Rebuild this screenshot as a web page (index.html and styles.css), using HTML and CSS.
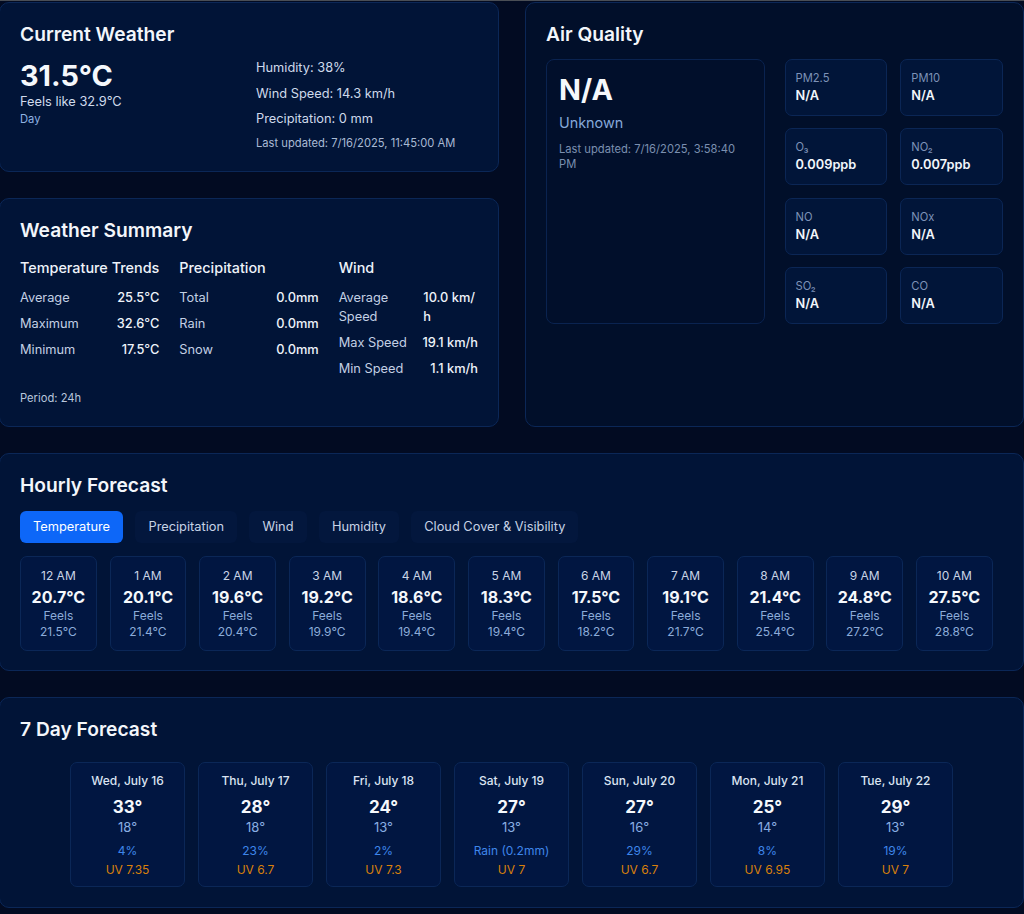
FILE: index.html
```html
<!DOCTYPE html>
<html lang="en">
<head>
<meta charset="utf-8">
<title>Weather Dashboard</title>
<link rel="stylesheet" href="styles.css">
</head>
<body>
<div class="page">
  <div class="top-grid">
    <div class="left-col">
      <section class="card current">
        <h2 class="card-title">Current Weather</h2>
        <div class="current-grid">
          <div class="current-main">
            <div class="big-temp">31.5°C</div>
            <div class="feels">Feels like 32.9°C</div>
            <div class="daynight">Day</div>
          </div>
          <div class="current-details">
            <p class="detail">Humidity: 38%</p>
            <p class="detail">Wind Speed: 14.3 km/h</p>
            <p class="detail">Precipitation: 0 mm</p>
            <p class="updated">Last updated: 7/16/2025, 11:45:00 AM</p>
          </div>
        </div>
      </section>

      <section class="card summary">
        <h2 class="card-title">Weather Summary</h2>
        <div class="summary-grid">
          <div class="summary-col">
            <h3 class="summary-head">Temperature Trends</h3>
            <div class="srow"><span class="slabel">Average</span><span class="svalue">25.5°C</span></div>
            <div class="srow"><span class="slabel">Maximum</span><span class="svalue">32.6°C</span></div>
            <div class="srow"><span class="slabel">Minimum</span><span class="svalue">17.5°C</span></div>
          </div>
          <div class="summary-col">
            <h3 class="summary-head">Precipitation</h3>
            <div class="srow"><span class="slabel">Total</span><span class="svalue">0.0mm</span></div>
            <div class="srow"><span class="slabel">Rain</span><span class="svalue">0.0mm</span></div>
            <div class="srow"><span class="slabel">Snow</span><span class="svalue">0.0mm</span></div>
          </div>
          <div class="summary-col">
            <h3 class="summary-head">Wind</h3>
            <div class="srow"><span class="slabel">Average Speed</span><span class="svalue">10.0 km/h</span></div>
            <div class="srow"><span class="slabel">Max Speed</span><span class="svalue">19.1 km/h</span></div>
            <div class="srow"><span class="slabel">Min Speed</span><span class="svalue">1.1 km/h</span></div>
          </div>
        </div>
        <p class="period">Period: 24h</p>
      </section>
    </div>

    <section class="card aq">
      <h2 class="card-title">Air Quality</h2>
      <div class="aq-grid">
        <div class="aq-main">
          <div class="aq-index">N/A</div>
          <div class="aq-status">Unknown</div>
          <div class="aq-updated">Last updated: 7/16/2025, 3:58:40 PM</div>
        </div>
        <div class="aq-pollutants">
          <div class="pollutant"><div class="plabel">PM2.5</div><div class="pvalue">N/A</div></div>
          <div class="pollutant"><div class="plabel">PM10</div><div class="pvalue">N/A</div></div>
          <div class="pollutant"><div class="plabel">O₃</div><div class="pvalue">0.009ppb</div></div>
          <div class="pollutant"><div class="plabel">NO₂</div><div class="pvalue">0.007ppb</div></div>
          <div class="pollutant"><div class="plabel">NO</div><div class="pvalue">N/A</div></div>
          <div class="pollutant"><div class="plabel">NOx</div><div class="pvalue">N/A</div></div>
          <div class="pollutant"><div class="plabel">SO₂</div><div class="pvalue">N/A</div></div>
          <div class="pollutant"><div class="plabel">CO</div><div class="pvalue">N/A</div></div>
        </div>
      </div>
    </section>
  </div>

  <section class="card hourly">
    <h2 class="card-title">Hourly Forecast</h2>
    <div class="tabs">
      <button class="tab active">Temperature</button>
      <button class="tab">Precipitation</button>
      <button class="tab">Wind</button>
      <button class="tab">Humidity</button>
      <button class="tab">Cloud Cover &amp; Visibility</button>
    </div>
    <div class="hours">
      <div class="hour"><div class="htime">12 AM</div><div class="htemp">20.7°C</div><div class="hfeels">Feels</div><div class="hfeels">21.5°C</div></div>
      <div class="hour"><div class="htime">1 AM</div><div class="htemp">20.1°C</div><div class="hfeels">Feels</div><div class="hfeels">21.4°C</div></div>
      <div class="hour"><div class="htime">2 AM</div><div class="htemp">19.6°C</div><div class="hfeels">Feels</div><div class="hfeels">20.4°C</div></div>
      <div class="hour"><div class="htime">3 AM</div><div class="htemp">19.2°C</div><div class="hfeels">Feels</div><div class="hfeels">19.9°C</div></div>
      <div class="hour"><div class="htime">4 AM</div><div class="htemp">18.6°C</div><div class="hfeels">Feels</div><div class="hfeels">19.4°C</div></div>
      <div class="hour"><div class="htime">5 AM</div><div class="htemp">18.3°C</div><div class="hfeels">Feels</div><div class="hfeels">19.4°C</div></div>
      <div class="hour"><div class="htime">6 AM</div><div class="htemp">17.5°C</div><div class="hfeels">Feels</div><div class="hfeels">18.2°C</div></div>
      <div class="hour"><div class="htime">7 AM</div><div class="htemp">19.1°C</div><div class="hfeels">Feels</div><div class="hfeels">21.7°C</div></div>
      <div class="hour"><div class="htime">8 AM</div><div class="htemp">21.4°C</div><div class="hfeels">Feels</div><div class="hfeels">25.4°C</div></div>
      <div class="hour"><div class="htime">9 AM</div><div class="htemp">24.8°C</div><div class="hfeels">Feels</div><div class="hfeels">27.2°C</div></div>
      <div class="hour"><div class="htime">10 AM</div><div class="htemp">27.5°C</div><div class="hfeels">Feels</div><div class="hfeels">28.8°C</div></div>
    </div>
  </section>

  <section class="card daily">
    <h2 class="card-title">7 Day Forecast</h2>
    <div class="days">
      <div class="day"><div class="dname">Wed, July 16</div><div class="dhigh">33°</div><div class="dlow">18°</div><div class="dprecip">4%</div><div class="duv">UV 7.35</div></div>
      <div class="day"><div class="dname">Thu, July 17</div><div class="dhigh">28°</div><div class="dlow">18°</div><div class="dprecip">23%</div><div class="duv">UV 6.7</div></div>
      <div class="day"><div class="dname">Fri, July 18</div><div class="dhigh">24°</div><div class="dlow">13°</div><div class="dprecip">2%</div><div class="duv">UV 7.3</div></div>
      <div class="day"><div class="dname">Sat, July 19</div><div class="dhigh">27°</div><div class="dlow">13°</div><div class="dprecip">Rain (0.2mm)</div><div class="duv">UV 7</div></div>
      <div class="day"><div class="dname">Sun, July 20</div><div class="dhigh">27°</div><div class="dlow">16°</div><div class="dprecip">29%</div><div class="duv">UV 6.7</div></div>
      <div class="day"><div class="dname">Mon, July 21</div><div class="dhigh">25°</div><div class="dlow">14°</div><div class="dprecip">8%</div><div class="duv">UV 6.95</div></div>
      <div class="day"><div class="dname">Tue, July 22</div><div class="dhigh">29°</div><div class="dlow">13°</div><div class="dprecip">19%</div><div class="duv">UV 7</div></div>
    </div>
  </section>
</div>
</body>
</html>
```

FILE: styles.css
```css
* { box-sizing: border-box; }

html, body {
  margin: 0;
  padding: 0;
}

body {
  background: #020b22;
  border-top: 1px solid #4a4e55;
  font-family: Inter, "Noto Sans", "Liberation Sans", sans-serif;
  color: #e8eef8;
  overflow: hidden;
}

.page {
  padding-top: 1px;
  margin-left: -1px;
  display: flex;
  flex-direction: column;
  gap: 26px;
  width: 1025px;
}

.top-grid {
  display: grid;
  grid-template-columns: 500px 499px;
  column-gap: 26px;
}

.left-col {
  display: flex;
  flex-direction: column;
  gap: 26px;
}

.card {
  background: #011437;
  border: 1px solid #0b2757;
  border-radius: 10px;
  padding: 20px;
}

.card-title {
  margin: 0 0 12px;
  font-size: 19.2px;
  line-height: 23px;
  font-weight: 600;
  color: #f3f6fb;
}

/* Current weather */
.current-grid {
  display: grid;
  grid-template-columns: minmax(0, 1fr) minmax(0, 1fr);
  column-gap: 14px;
}

.big-temp {
  margin-top: 1px;
  font-size: 28.8px;
  line-height: 33.5px;
  font-weight: 700;
  color: #f5f8fc;
}

.feels {
  font-size: 12.8px;
  line-height: 18px;
  color: #d0dbec;
}

.daynight {
  font-size: 11.2px;
  line-height: 16px;
  color: #8fb2e3;
}

.detail {
  margin: 0 0 5.5px;
  font-size: 12.8px;
  line-height: 20px;
  color: #cfdaeb;
}

.updated {
  margin: 0;
  font-size: 11.2px;
  line-height: 16.5px;
  color: #a9bad4;
}

/* Summary */
.summary .card-title { margin-bottom: 15px; }

.summary-grid {
  display: grid;
  grid-template-columns: repeat(3, minmax(0, 1fr));
  column-gap: 20px;
}

.summary-col {
  display: flex;
  flex-direction: column;
  gap: 6.5px;
}

.summary-head {
  margin: 0 0 2.6px;
  font-size: 14.4px;
  line-height: 22px;
  font-weight: 500;
  color: #eef3fa;
  white-space: nowrap;
}

.srow {
  display: flex;
  justify-content: space-between;
  font-size: 12.8px;
  line-height: 19.2px;
}

.slabel { color: #c3d0e4; }
.svalue { color: #eef3fa; font-weight: 500; word-break: break-all; }

.period {
  margin: 12.5px 0 0;
  font-size: 11.2px;
  line-height: 16px;
  color: #b8c6dc;
}

/* Air quality */
.aq {
  background: #010f2a;
}

.aq .card-title { margin-bottom: 13px; }

.aq-grid {
  display: grid;
  grid-template-columns: minmax(0, 1fr) minmax(0, 1fr);
  column-gap: 20px;
}

.aq-main {
  border: 1px solid #0a2350;
  border-radius: 8px;
  padding: 12px 12px;
  background: #010f2b;
}

.aq-index {
  font-size: 28.8px;
  line-height: 36px;
  font-weight: 700;
  color: #f5f8fc;
}

.aq-status {
  font-size: 14.4px;
  line-height: 22px;
  color: #86a9d9;
  margin-top: 4px;
}

.aq-updated {
  margin-top: 8px;
  font-size: 11.2px;
  line-height: 15px;
  color: #7b8fb0;
}

.aq-pollutants {
  display: grid;
  grid-template-columns: minmax(0, 1fr) minmax(0, 1fr);
  column-gap: 13px;
  row-gap: 12.3px;
}

.pollutant {
  background: #011539;
  border: 1px solid #0b2655;
  border-radius: 7px;
  padding: 10px 10px;
}

.plabel {
  font-size: 11.2px;
  line-height: 16px;
  color: #7d92b7;
}

.pvalue {
  font-size: 12.8px;
  line-height: 19px;
  font-weight: 600;
  color: #f2f6fb;
}

/* Hourly */
.hourly { padding-bottom: 19px; }
.hourly .card-title { margin-bottom: 14px; }

.tabs {
  display: flex;
  gap: 12.4px;
  margin-bottom: 13px;
}

.tab {
  font-family: inherit;
  font-size: 12.8px;
  line-height: 20px;
  padding: 6px 13px;
  border: none;
  border-radius: 6px;
  background: #03173d;
  color: #c7d3e6;
}

.tab.active {
  background: #0d67f8;
  color: #ffffff;
}

.hours {
  display: flex;
  gap: 12.8px;
}

.hour {
  flex: 0 0 76.8px;
  text-align: center;
  background: #011641;
  border: 1px solid #0b2757;
  border-radius: 7px;
  padding: 11px 2px 10px;
}

.htime {
  font-size: 12px;
  line-height: 16px;
  color: #c9d4e6;
}

.htemp {
  font-size: 16px;
  line-height: 22px;
  font-weight: 700;
  color: #f5f8fc;
  margin-top: 2px;
}

.hfeels {
  font-size: 12px;
  line-height: 16px;
  color: #8cacd9;
}

/* Daily */
.daily .card-title { margin-bottom: 21px; }

.days {
  display: flex;
  justify-content: center;
  gap: 12.8px;
}

.day {
  flex: 0 0 115.2px;
  text-align: center;
  background: #011641;
  border: 1px solid #0b2757;
  border-radius: 7px;
  padding: 10px 2px 8px;
}

.dname {
  font-size: 12px;
  line-height: 16px;
  font-weight: 500;
  color: #dbe4f2;
}

.dhigh {
  margin-top: 7px;
  font-size: 17px;
  line-height: 22px;
  font-weight: 700;
  color: #f5f8fc;
}

.dlow {
  font-size: 13px;
  line-height: 18px;
  color: #8aaee3;
}

.dprecip {
  margin-top: 7px;
  font-size: 12px;
  line-height: 16px;
  color: #3f86ea;
}

.duv {
  margin-top: 3px;
  font-size: 12px;
  line-height: 16px;
  color: #d9800b;
}
```
